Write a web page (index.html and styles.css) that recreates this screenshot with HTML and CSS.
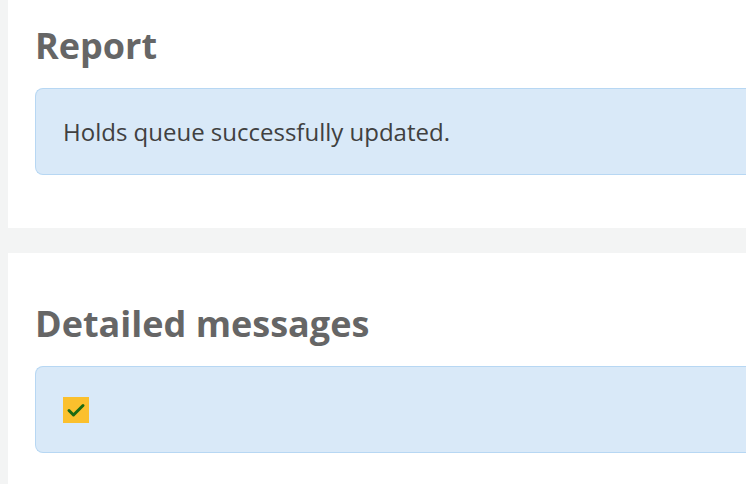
FILE: index.html
```html
<!DOCTYPE html>
<html>
<head>
<meta charset="utf-8">
<link rel="stylesheet" href="styles.css">
</head>
<body>
<main class="page">
  <section class="panel panel-report">
    <h1 class="panel-title">Report</h1>
    <div class="alert">Holds queue successfully updated.</div>
  </section>
  <section class="panel panel-detail">
    <h1 class="panel-title">Detailed messages</h1>
    <div class="alert alert-check">
      <span class="check">
        <svg width="26" height="26" viewBox="0 0 26 26"><path d="M6 13.5 L10.5 18 L20 8.5" fill="none" stroke="#1d6a12" stroke-width="3" stroke-linecap="round" stroke-linejoin="round"/></svg>
      </span>
    </div>
  </section>
</main>
</body>
</html>
```

FILE: styles.css
```css
html, body {
  margin: 0;
  padding: 0;
  background: #f3f4f4;
  font-family: "Open Sans", "Noto Sans", sans-serif;
  overflow: hidden;
}
.page {
  padding-left: 8px;
  display: flex;
  flex-direction: column;
  gap: 25px;
}
.panel {
  background: #fff;
  padding-left: 27px;
}
.panel-report {
  height: 228px;
  padding-top: 26px;
  box-sizing: border-box;
}
.panel-detail {
  height: 231px;
  padding-top: 51px;
  box-sizing: border-box;
}
.panel-title {
  margin: 0;
  font-size: 36px;
  line-height: 40px;
  font-weight: 700;
  color: #666;
  height: 62px;
}
.alert {
  background: #d9e9f8;
  border: 1.5px solid #b7d7f3;
  border-right: none;
  border-radius: 8px 0 0 8px;
  height: 87px;
  box-sizing: border-box;
  display: flex;
  align-items: center;
  padding-left: 27px;
  font-size: 24px;
  color: #404040;
}
.check {
  width: 26px;
  height: 26px;
  background: #fbc02d;
  display: block;
}
.check svg { display: block; }
```
